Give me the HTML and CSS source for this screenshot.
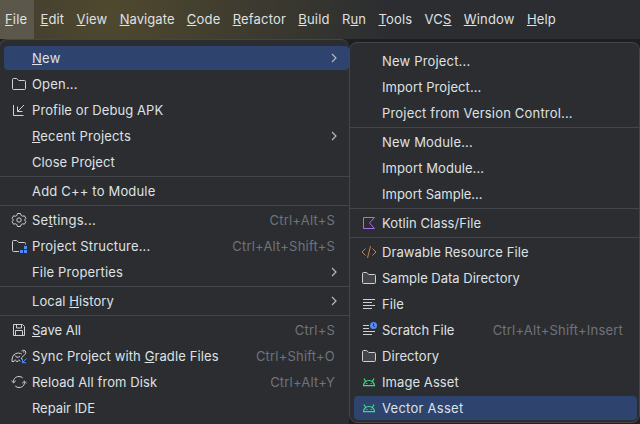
FILE: index.html
```
<!DOCTYPE html>
<html lang="en">
<head>
<meta charset="utf-8">
<title>File menu</title>
<link rel="stylesheet" href="styles.css">
</head>
<body>
<svg width="0" height="0" class="defs">
  <defs>
    <symbol id="folder" viewBox="0 0 16 16"><path d="M1.500 3.500q0-1 1-1h3.200l2 2h5.800q1 0 1 1v7q0 1-1 1h-11q-1 0-1-1z"/></symbol>
    <symbol id="chevron" viewBox="0 0 16 16"><path d="M6 4l4 4-4 4"/></symbol>
    <symbol id="android" viewBox="0 0 16 16"><path d="M2.500 11.700a5.500 5.200 0 0 1 11 0zM4.700 7.500L3 4.500M11.300 7.500L13 4.500"/><path d="M5.200 9.500h1.200M9.600 9.500h1.200"/></symbol>
  </defs>
</svg>
<nav class="bar">
  <span class="tab active"><u>F</u>ile</span>
  <span class="tab"><u>E</u>dit</span>
  <span class="tab"><u>V</u>iew</span>
  <span class="tab snug"><u>N</u>avigate</span>
  <span class="tab"><u>C</u>ode</span>
  <span class="tab"><u>R</u>efactor</span>
  <span class="tab"><u>B</u>uild</span>
  <span class="tab">R<u>u</u>n</span>
  <span class="tab"><u>T</u>ools</span>
  <span class="tab">VC<u>S</u></span>
  <span class="tab"><u>W</u>indow</span>
  <span class="tab"><u>H</u>elp</span>
</nav>
<main class="menus">
  <section class="menu file-menu">
    <div class="item selected"><i></i><span class="wide"><u>N</u>ew</span><svg class="arrow"><use href="#chevron"/></svg></div>
    <div class="item"><svg class="icon"><use href="#folder"/></svg><span>Open...</span></div>
    <div class="item"><svg class="icon" viewBox="0 0 16 16"><path d="M2.500 3v10.500h10M13 3L6.500 9.500M6.500 4.500v5h5"/></svg><span class="snug">Profile or Debug APK</span></div>
    <div class="item"><i></i><span><u>R</u>ecent Projects</span><svg class="arrow"><use href="#chevron"/></svg></div>
    <div class="item"><i></i><span class="snug">Close Pro<u>j</u>ect</span></div>
    <hr>
    <div class="item"><i></i><span>Add C++ to Module</span></div>
    <hr>
    <div class="item"><svg class="icon" viewBox="0 0 16 16"><path d="M6.500 1.500h3l.7 2 1.200.7 2-.4 1.500 2.600-1.400 1.600 1.400 1.600-1.500 2.600-2-.4-1.200.7-.7 2h-3l-.7-2-1.200-.7-2 .4-1.500-2.600L2.500 8 1.100 6.400l1.500-2.600 2 .4 1.200-.7z"/><circle cx="8" cy="8" r="2.200"/></svg><span class="wide">Se<u>t</u>tings...</span><kbd>Ctrl+Alt+S</kbd></div>
    <div class="item"><svg class="icon" viewBox="0 0 16 16"><path d="M8 13.500H2.500q-1 0-1-1v-9q0-1 1-1h3.200l2 2h5.800q1 0 1 1v1"/><path class="blue-fill" d="M13 8h3v3h-3zM9 12h3v3H9zM13 12h3v3h-3z"/></svg><span>Project Structure...</span><kbd>Ctrl+Alt+Shift+S</kbd></div>
    <div class="item"><i></i><span>File Properties</span><svg class="arrow"><use href="#chevron"/></svg></div>
    <hr>
    <div class="item"><i></i><span class="snug">Local <u>H</u>istory</span><svg class="arrow"><use href="#chevron"/></svg></div>
    <hr>
    <div class="item"><svg class="icon" viewBox="0 0 16 16"><path d="M2.500 2.500h9l2 2v9h-11zM5.500 2.500v3.500h5V2.500M4.500 13.500v-5h7v5"/></svg><span class="tight"><u>S</u>ave All</span><kbd>Ctrl+S</kbd></div>
    <div class="item"><svg class="icon" viewBox="0 0 16 16"><path d="M10.500 3.200c1-1.500 4-1.300 4.300.8.300 2-1.800 3.200-3.100 4.400-.8.800-1.200 1.600-1.200 3M13.300 3.800c-.6-.6-1.300 0-1 .6M1 13.500c-.2-3.500.8-6.800 3.500-7.800 2-1 4.500-.7 6.300.3M1 13.500h2c.2-2 2-2 2.300 0h1.500c.2-2 2-2 2.200 0M4 7.500c1 2 3 2.500 5 .8"/><path class="blue" d="M15.500 10.500l-4 4M11.500 11v3.700h3.700"/></svg><span class="mid">Sync Project with <u>G</u>radle Files</span><kbd>Ctrl+Shift+O</kbd></div>
    <div class="item"><svg class="icon" viewBox="0 0 16 16"><path d="M2.600 8.500C2 5 4.500 2.500 8 2.500c1.500 0 2.700.5 3.700 1.400M13.400 7.500c.6 3.500-1.900 6-5.400 6-1.500 0-2.700-.5-3.700-1.400M.5 6.800l2.100 2 2.200-2M11.200 9.200l2.200-2 2.100 2"/></svg><span class="snug">Reload All from Disk</span><kbd>Ctrl+Alt+Y</kbd></div>
    <div class="item"><i></i><span class="tighter">Repair IDE</span></div>
  </section>
  <section class="menu new-menu">
    <div class="item"><i></i><span>New Project...</span></div>
    <div class="item"><i></i><span class="snug">Import Project...</span></div>
    <div class="item"><i></i><span>Project from Version Control...</span></div>
    <hr>
    <div class="item"><i></i><span>New Module...</span></div>
    <div class="item"><i></i><span class="snug">Import Module...</span></div>
    <div class="item"><i></i><span class="tight">Import Sample...</span></div>
    <hr>
    <div class="item"><svg class="icon kotlin" viewBox="0 0 16 16"><path d="M2.500 2.500h11L8.500 8l5 5.500h-11z"/></svg><span class="snug">Kotlin Class/File</span></div>
    <hr>
    <div class="item"><svg class="icon orange" viewBox="0 0 16 16"><path d="M4.500 4.500L1 8l3.500 3.500M11.500 4.500L15 8l-3.500 3.500M9.500 2l-3 12"/></svg><span class="snug">Drawable Resource File</span></div>
    <div class="item"><svg class="icon filled"><use href="#folder"/></svg><span class="tight">Sample Data Directory</span></div>
    <div class="item"><svg class="icon" viewBox="0 0 16 16"><path d="M2 3.500h12M2 6.500h9M2 9.500h12M2 12.500h9"/></svg><span class="snug">File</span></div>
    <div class="item"><svg class="icon" viewBox="0 0 16 16"><path d="M2 3.500h6M2 6.500h6M2 9.500h12M2 12.500h9"/><circle class="blue-fill" cx="12.500" cy="3.500" r="3.500"/><path class="hand" d="M12.500 1.500v2.200l1.300 1.300"/></svg><span class="tight">Scratch File</span><kbd>Ctrl+Alt+Shift+Insert</kbd></div>
    <div class="item"><svg class="icon filled"><use href="#folder"/></svg><span class="snug">Directory</span></div>
    <div class="item"><svg class="icon green"><use href="#android"/></svg><span class="snug">Image Asset</span></div>
    <div class="item selected"><svg class="icon green"><use href="#android"/></svg><span class="wide">Vector Asset</span></div>
  </section>
</main>
</body>
</html>
```
FILE: styles.css
```
* { box-sizing: border-box; }
body {
  margin: 0;
  width: 640px;
  height: 424px;
  overflow: hidden;
  background: #1e1f22;
  color: #dfe1e5;
  font: 13px/26px Inter, sans-serif;
  letter-spacing: 0.18px;
}
.defs { display: block; }
.wide { letter-spacing: 0.26px; }
.mid { letter-spacing: 0.11px; }
.snug { letter-spacing: 0.08px; }
.tight { letter-spacing: 0; }
.tighter { letter-spacing: -0.06px; }
u {
  text-decoration: underline 1px;
  text-underline-offset: 1px;
  text-decoration-skip-ink: none;
}
.bar {
  display: flex;
  height: 39px;
  background: radial-gradient(ellipse 280px 240px at 110px 10px, #50492f, #2b2d30) #2b2d30;
}
.tab { padding: 6px 6.25px 0 6px; white-space: nowrap; }
.tab.active { width: 34px; margin-right: 0.4px; padding-left: 5px; padding-right: 0; background: #5b574a; }
.menus { display: flex; align-items: flex-start; }
.menu {
  flex: none;
  background: #2b2d30;
  border: 1px solid #43454a;
  border-radius: 8px;
}
.file-menu {
  width: 350px;
  height: 400px;
  margin-left: -1px;
  padding-top: 5px;
  border-right: 0;
  border-radius: 8px 8px 0 0;
}
.new-menu {
  width: 291px;
  height: 381px;
  margin: 3px 0 0;
  padding-top: 5px;
}
.item {
  display: flex;
  align-items: center;
  height: 26px;
  margin: 0 0 0 4px;
  padding: 0 14px 0 7px;
  white-space: nowrap;
}
.item span { flex: 1; }
.item i, .icon { flex: none; width: 16px; height: 16px; margin-right: 5px; }
.icon, .arrow { fill: none; stroke: #ced0d6; stroke-width: 1; }
.arrow { width: 16px; height: 16px; margin-right: -7px; stroke: #b4b8bf; stroke-width: 1.2; }
.item.selected {
  height: 24px;
  margin-top: 1px;
  margin-bottom: 1px;
  background: #2e436e;
  border-radius: 4px;
}
.new-menu .item { margin-right: 2px; }
kbd { font: inherit; letter-spacing: 0.2px; color: #6f737a; }
hr { height: 1px; margin: 1px 0; border: 0; background: #43454a; }
.blue-fill { fill: #548af7; stroke: none; }
.blue { stroke: #548af7; }
.hand { stroke: #2b2d30; }
.kotlin { stroke: #a571e6; fill: #2f2936; }
.orange { stroke: #c77d55; }
.green { stroke: #3ddc84; stroke-width: 1.2; }
.filled { fill: #43454a; }
```
